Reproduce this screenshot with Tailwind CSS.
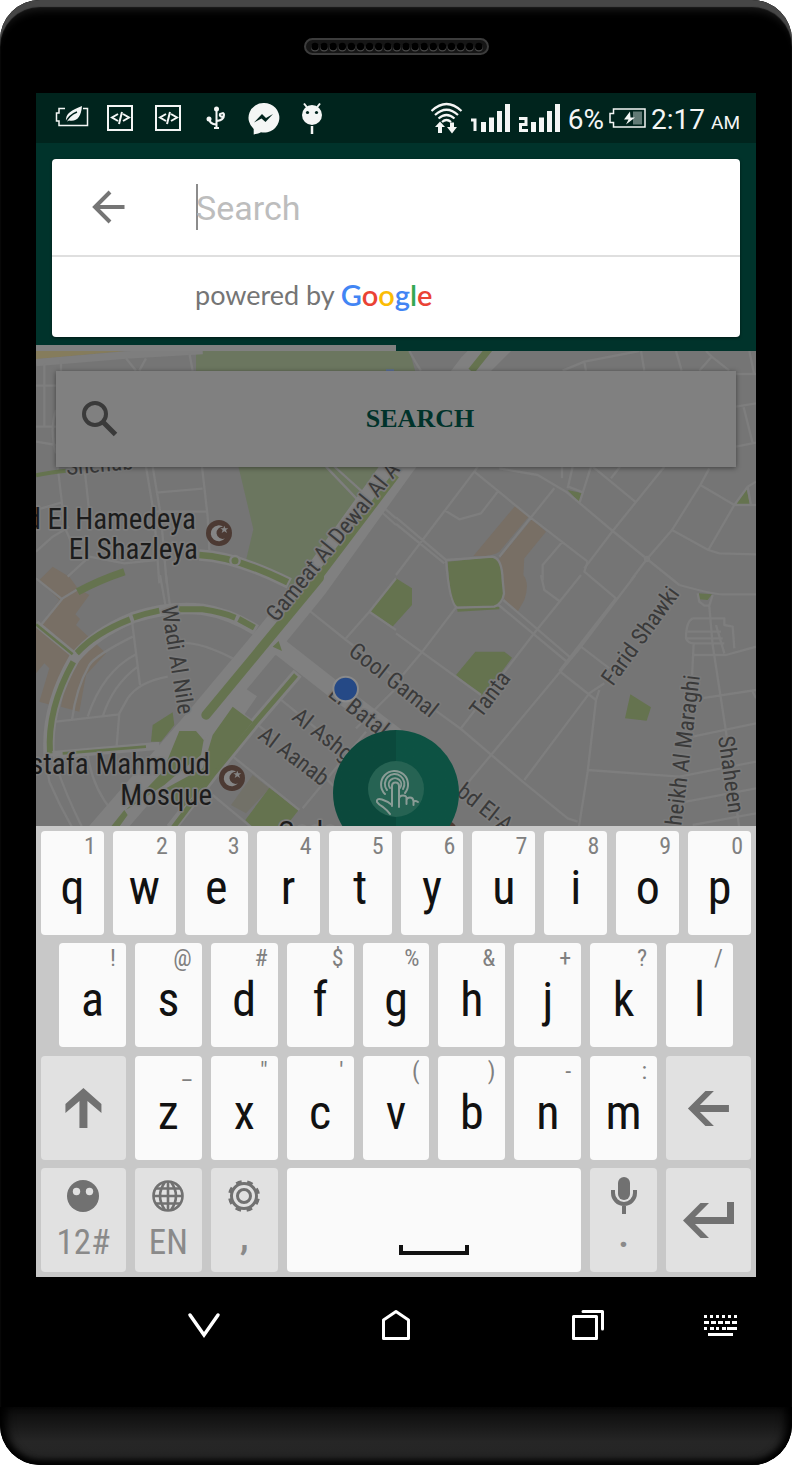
<!DOCTYPE html>
<html lang="en">
<head>
<meta charset="utf-8">
<meta name="viewport" content="width=device-width, initial-scale=1">
<title>Place search</title>
<script src="https://cdn.jsdelivr.net/npm/@tailwindcss/browser@4"></script>
</head>
<body class="bg-white font-['Roboto',sans-serif]">
<div class="flex min-h-screen flex-col overflow-hidden rounded-[40px] bg-black shadow-[inset_0_7px_1px_#464646,inset_0_16px_8px_-6px_#1c1c1c]">

  <!-- Earpiece -->
  <div class="flex h-[93px] justify-center pt-[38px]">
    <div class="h-[17px] w-[185px] rounded-full border-2 border-[#3c3c3c] bg-[#161616]">
      <svg class="block h-full w-full" viewBox="0 0 181 13" aria-hidden="true">
        <path d="M9 7.500H173" stroke="#4a4a4a" stroke-width="8" stroke-linecap="round" stroke-dasharray="0 9.100"/>
        <path d="M9 6.500H173" stroke="#000" stroke-width="7.500" stroke-linecap="round" stroke-dasharray="0 9.100"/>
      </svg>
    </div>
  </div>

  <main class="mx-9">
    <!-- Status bar -->
    <div class="flex h-[50px] items-center justify-between bg-[#00241d] pr-4 pl-3 text-[#f4f6f5]">
      <div class="flex [&>svg]:h-[50px] [&>svg]:w-12" aria-hidden="true">
        <svg viewBox="0 0 48 50" fill="none" stroke="currentColor"><path d="M17 15.500H11V20H8.500V28H11V32.500H39.500V15.500H35" stroke-width="1.500"/><path d="M18 29C17 20 24 17 34 13C33 24 29 29 21 27.500Z" fill="currentColor" stroke="none"/><path d="M17.500 30C20 24 24 21 29 19" stroke="#00241d" stroke-width="1.500"/></svg>
        <svg viewBox="0 0 48 50" fill="none" stroke="currentColor" stroke-width="2"><path d="M12 13H36V37H12Z"/><path d="M22 21L16 24.500L22 28M27 21L33 24.500L27 28M26 19L23 31"/></svg>
        <svg viewBox="0 0 48 50" fill="none" stroke="currentColor" stroke-width="2"><path d="M12 13H36V37H12Z"/><path d="M22 21L16 24.500L22 28M27 21L33 24.500L27 28M26 19L23 31"/></svg>
        <svg viewBox="0 0 48 50" fill="none" stroke="currentColor" stroke-width="2"><path d="M24.500 16V35M22 35H27M17 26Q18 31 24 31.500M25 28Q32 27 32 22M28 21A2 2 0 1 0 31 20Z"/><circle cx="24.500" cy="16" r="2.500" fill="currentColor" stroke="none"/><circle cx="17" cy="26" r="2.500" fill="currentColor" stroke="none"/></svg>
        <svg viewBox="0 0 48 50"><path d="M24 10A15.300 14.800 0 1 1 21 39.300C18 41 15.500 41 13.700 41.500V36A15 14.800 0 0 1 24 10Z" fill="currentColor"/><path d="M14 29.500L22 21L26 25L33 21L25.500 29L21.500 25.500Z" fill="#00241d"/></svg>
        <svg viewBox="0 0 48 50"><circle cx="24" cy="22" r="10" fill="currentColor"/><path d="M19.500 15L16 10.500M28.500 15L32 10.500" stroke="currentColor" stroke-width="2"/><path d="M24 33V41" stroke="currentColor" stroke-width="2.500"/><circle cx="19.500" cy="19.500" r="1.600" fill="#00241d"/><circle cx="28.500" cy="19.500" r="1.600" fill="#00241d"/></svg>
      </div>
      <div class="flex items-center">
        <svg class="h-[50px] w-[132px]" viewBox="430 93 132 50" fill="none" stroke="currentColor" stroke-width="2" aria-hidden="true">
          <path d="M430.500 111Q445.500 97 460.500 111M434 115Q445.500 104.500 457 115M437.500 118.500Q445.500 111.500 453.500 118.500M441 122Q445.500 118 450 122" stroke-width="2.200"/>
          <path d="M434 127L439 121.500L444 127H441V133H437V127ZM446 127H449V122.500H453V127H456L451 133.500Z" fill="currentColor" stroke="none"/>
          <path d="M470 120H474V131" stroke-width="3"/><path d="M482.500 122V132M490.500 117.500V132M498.500 111V132M506.500 104V132M532.500 122V132M540.500 117.500V132M548.500 111V132M556.500 104V132" stroke-width="5"/>
          <path d="M518 118.500H525V124.500H519.500V130.500H527" stroke-width="3"/>
        </svg>
        <span class="ml-[5px] pt-1 text-[28px] leading-8">6%</span>
        <svg class="mx-[5px] h-[50px] w-[37px]" viewBox="0 0 37 50" fill="none" stroke="currentColor" aria-hidden="true"><path d="M4.500 16H36V34H4.500V29.500H1V20.500H4.500Z" stroke-width="1.500"/><path d="M24 18.500H33V31.500H24Z" fill="#617a75" stroke="none"/><path d="M21 18.500L15 26.500H19.500L17 31.500L26 24.500H21.500Z" fill="currentColor" stroke="none"/></svg>
        <span class="flex items-baseline gap-[6px] pt-1 text-[28px] leading-8">2:17<span class="text-[19px] leading-5">AM</span></span>
      </div>
    </div>

    <!-- App header with the autocomplete overlay -->
    <div class="bg-[#00332b]">
      <div class="px-4 pt-4 pb-2">
        <div class="rounded-[4px] bg-white shadow-[0_1px_3px_rgba(0,0,0,0.5)]">
          <div class="flex h-[98px] items-center border-b-2 border-[#dfdfdf] pl-10">
            <button type="button" aria-label="Back" class="w-[104px]">
              <svg class="h-9 w-9" viewBox="0 0 36 36" fill="none" stroke="#757575" stroke-width="4" aria-hidden="true"><path d="M32.500 18H3M18 3L3 18L18 33"/></svg>
            </button>
            <span class="-mr-[2px] h-[46px] w-[2px] bg-[#8c8c8c]"></span>
            <input type="text" aria-label="Search" placeholder="Search" class="h-16 min-w-0 flex-1 bg-transparent pt-[2px] text-[34px] text-[#333] outline-none placeholder:text-[#bdbdbd]">
          </div>
          <div class="flex h-20 items-center gap-[6px] pb-1 pl-[143px] font-['Lato',sans-serif]">
            <span class="text-[27px] text-[#757575]">powered by</span>
            <span class="text-[29px] font-semibold text-[#4285f4]">G<span class="text-[#ea4335]">o</span><span class="text-[#fbbc05]">o</span>g<span class="text-[#34a853]">l</span><span class="text-[#ea4335]">e</span></span>
          </div>
        </div>
      </div>
      <div class="h-[6px] w-1/2 bg-[#808080]"></div>
    </div>

    <!-- Map -->
    <section class="relative h-[475px] overflow-hidden bg-[#757575]" aria-label="Map">
      <svg class="absolute inset-0 h-full w-full" viewBox="0 0 2160 1425" preserveAspectRatio="xMidYMin slice" role="img" aria-label="Street map">
        <!-- parks and built-up areas -->
        <path d="M480 0H1118L1140 80L1090 350L880 640L760 720L624 663L652 545L605 347L480 100Z" transform="translate(0 -10)" fill="#6b765f"/>
        <path d="M0 0H270L0 25Z" fill="#857c5c"/>
        <g transform="translate(0 672)">
          <g fill="#786f65"><path d="M10 15L50 -25L100 5L125 40L160 60L118 118L132 132L120 150L210 235L150 300L130 410L75 395L100 260L15 150L70 75Z"/><path d="M0 150L110 240L60 330L45 390L10 380L40 280L25 265L0 295Z"/></g>
          <path d="M585 690L650 600L700 640L630 715Z" fill="#727168"/>
          <path d="M1000 108L1080 10L1128 40V90L1068 157ZM700 638L788 705L745 760H650L628 735Z" fill="#65734f"/>
        </g>
        <g transform="translate(1080 -63)">
          <g fill="#786f65"><path d="M358 527L398 560L310 665Q290 680 232 678Z"/><path d="M408 567L450 605L385 685L382 735Q402 760 385 810L365 845L325 815L320 720L308 688Z"/></g>
          <g fill="#65734f"><path d="M155 695L285 682Q312 690 318 720L323 800Q315 825 295 827L185 830Q165 820 163 800ZM515 480L560 490L550 518ZM1052 478L1062 525H1018ZM183 836L310 830V838L185 845Z"/><path d="M180 1035L238 965H325L348 983L310 1035L255 1097ZM703 1093L765 1132L752 1172L687 1165ZM905 790L948 793L935 810L908 808Z"/></g>
        </g>
        <!-- minor roads -->
        <g fill="none" stroke="#7e7e7e" stroke-width="7" stroke-linejoin="round">
          <g transform="translate(0 -63)"><path d="M0 98L270 75L500 62" stroke-width="22"/><path d="M25 100V290M75 90V290M0 167H60M0 290H60M0 335L60 345M60 240Q40 300 60 370M65 410L78 520L85 590Q100 620 110 650M145 410L158 530M330 410L355 560L370 760M350 410L375 560L392 760M360 488L500 476M498 410L515 560L520 660M360 545H510M0 540L75 518M0 665L50 620L100 590M95 740L160 680L265 700L360 690M460 70L470 122M270 85L300 122M330 85L310 122M870 410L975 520M890 405L995 500M1040 530L1080 565M1030 540L1080 585"/></g>
          <g transform="translate(0 672)"><path d="M15 150L80 70L130 40M0 10L75 70M287 130L312 330M290 185Q180 240 160 270Q120 340 108 435M300 238Q200 290 155 425M305 275Q230 330 200 425M395 305Q310 320 275 370L250 415L242 512M60 440L250 418M440 205Q490 200 590 250M372 0L390 100M390 0L402 95M60 570Q90 660 140 760M30 560L40 620Q70 690 110 760M155 540Q170 640 230 710M805 95L930 195L1200 400M930 190L1000 110L1080 10M1000 110L1080 165M730 370L1000 590M590 395L720 490M585 540L790 705M800 700L990 470M530 660L650 760M1075 345L960 460M870 610L900 640"/></g>
          <g transform="translate(1080 -63)"><path d="M40 63Q60 100 75 122M500 122L565 95L730 63M565 95L570 122M735 63L745 122M840 63L857 122M910 122L947 80L930 63M947 80L1000 122M1060 63L1075 135M1020 132H1080M1020 230L1080 220M1043 232L1070 340M1020 350L1080 338M235 425L0 735M245 410L235 425L400 560L575 695M305 485L255 550L190 568L148 542M475 475L310 680M310 415L425 435L510 485L650 603L753 687L850 765M515 475L530 410M585 410L550 520M517 470L562 488M590 410L720 517M805 410L650 603L565 715M645 445L672 410M940 415L913 465L828 600L753 687L705 750M913 465L1015 525H1080M1055 470L1015 525L937 660M1055 470L1065 525M1055 470L1080 455M828 600L937 660L970 670L1080 673M498 637L440 705V750M0 562L150 690L290 680Q318 685 320 750L324 790Q320 820 295 830L183 833Q160 820 150 690M0 582L145 700M498 410V445"/><circle cx="753" cy="687" r="6"/></g>
          <g transform="translate(1080 672)"><path d="M180 97L75 235L20 300M0 175L255 360M322 75L520 245M308 90L510 258M555 0L418 170L195 460M718 0L555 215L285 540L210 630M575 -40L565 -10L660 70L490 288M435 0L445 45L490 78M490 288L600 375L610 345M555 215L640 280M110 400L195 462L380 620L515 730L545 740M385 615L580 355L625 325M600 375L575 590L548 760M575 585L850 605L1080 560M850 30Q950 58 980 58H1080M905 55L910 80L925 92H940L950 60M940 95L950 210L990 470L1030 760M890 130H985V150L1010 155L1015 220M890 130Q870 140 870 190Q875 205 895 205H985M875 170H975M870 190H980M960 150L985 235M893 205L885 370M893 240H990L1080 215M915 370L1080 345M890 485L1080 445M870 680L1080 640M890 750L1080 715M1070 350L1080 370"/></g>
        </g>
        <!-- boulevards with planted medians -->
        <g fill="none" stroke-linejoin="round">
          <g transform="translate(0 672)">
            <path d="M40 545Q28 400 115 250Q175 175 290 128Q400 92 500 103Q580 115 660 165" stroke="#808080" stroke-width="34"/>
            <path d="M42 535Q33 400 112 260M122 235Q175 175 282 133M292 128Q330 115 370 107M428 103H500Q560 112 598 128M608 132L655 158" stroke="#65734f" stroke-width="18"/>
            <path d="M125 50Q190 15 265 -10" stroke="#65734f" stroke-width="22"/>
            <path d="M490 -60Q600 -55 760 25" stroke="#808080" stroke-width="34"/><path d="M490 -60Q600 -55 755 22" stroke="#65734f" stroke-width="20"/><circle cx="597" cy="-43" r="14" fill="#65734f" stroke="#808080" stroke-width="7"/>
            <path d="M0 145L115 240" stroke="#808080" stroke-width="20"/><path d="M0 148L110 238" stroke="#65734f" stroke-width="8"/>
            <path d="M50 540L370 512" stroke="#808080" stroke-width="24"/><path d="M80 535L330 515" stroke="#65734f" stroke-width="8"/>
            <path d="M785 295L660 440L530 600L405 760" stroke="#808080" stroke-width="32"/><path d="M780 300L660 440L530 600L410 760" stroke="#65734f" stroke-width="15"/>
            <path d="M690 215H730L890 340L1010 430L1230 600" stroke="#808080" stroke-width="52"/>
          </g>
          <path d="M0 373Q50 362 90 359" stroke="#65734f" stroke-width="12"/>
          <path d="M1400 -40L1310 50L1090 340L830 702L700 862L480 1125L190 1460" stroke="#808080" stroke-width="92"/>
          <path d="M1370 -20L1306 60M1080 372L830 702" stroke="#65734f" stroke-width="22"/>
          <path d="M850 680L700 862L510 1092" stroke="#65734f" stroke-width="28" stroke-linecap="round"/>
          <path d="M640 1020L520 1192L480 1242L330 1322L215 1440" stroke="#808080" stroke-width="56"/>
        </g>
        <g transform="translate(0 672)" fill="#65734f"><path d="M430 468H480L503 495L495 540L420 600L385 630L270 705L380 590Z"/><path d="M590 395L650 440L525 600L440 700L390 640L500 580L530 480Z"/><path d="M410 412L350 450L345 500H375L415 450ZM225 755L265 705L275 720L250 755ZM710 215L728 198L738 228Z"/></g>
        <!-- street names -->
        <g fill="#3a3a3a" stroke="#7a7a7a" stroke-width="10" stroke-linejoin="round" paint-order="stroke" font-family="'Roboto Condensed', Roboto, sans-serif" font-size="69">
          <text transform="translate(92 372) rotate(-5)">Shehab</text>
          <text transform="translate(722 816) rotate(-51)">Gameat Al Dewal Al A</text>
          <text transform="translate(376 768) rotate(81)">Wadi Al Nile</text>
          <text transform="translate(934 908) rotate(38)">Gool Gamal</text>
          <text transform="translate(873 1034) rotate(38)">El Batal</text>
          <text transform="translate(764 1104) rotate(38)">Al Ashg</text>
          <text transform="translate(662 1160) rotate(37)">Al Aanab</text>
          <text transform="translate(1335 1104) rotate(-53)">Tanta</text>
          <text transform="translate(1730 1008) rotate(-54)">Farid Shawki</text>
          <text transform="translate(1936 1426) rotate(-83)">heikh Al Maraghi</text>
          <text transform="translate(2046 1158) rotate(82)">Shaheen</text>
          <text transform="translate(1258 1330) rotate(38)">bd El-A</text>
        </g>
        <g fill="#1c1c1c" stroke="#7d7d7d" stroke-width="10" stroke-linejoin="round" paint-order="stroke" font-family="'Roboto Condensed', Roboto, sans-serif" font-size="87" text-anchor="end">
          <text x="480" y="534">d El Hamedeya</text>
          <text x="486" y="625">El Shazleya</text>
          <text x="522" y="1269">stafa Mahmoud</text>
          <text x="528" y="1361">Mosque</text>
          <text x="965" y="1474">Gada F</text>
        </g>
        <!-- mosque markers -->
        <g transform="translate(549 546)"><circle r="39" fill="#4c3a33"/><path d="M14 -18A24 24 0 1 0 18 16A18 18 0 1 1 14 -18Z" fill="#858585"/><path d="M16 -22L19 -14H28L21 -9L24 0L16 -5L8 0L11 -9L4 -14H13Z" fill="#858585"/></g>
        <g transform="translate(588 1281)"><circle r="39" fill="#4c3a33"/><path d="M14 -18A24 24 0 1 0 18 16A18 18 0 1 1 14 -18Z" fill="#858585"/><path d="M16 -22L19 -14H28L21 -9L24 0L16 -5L8 0L11 -9L4 -14H13Z" fill="#858585"/></g>
        <circle cx="1226" cy="1446" r="39" fill="#4c3a33"/>
        <circle cx="929" cy="1014" r="37" fill="#254986" stroke="#8a8a8a" stroke-width="6"/>
        <path d="M1050 59H1074" stroke="#5a6f9a" stroke-width="8"/>
      </svg>

      <div class="relative px-5 pt-5">
        <button type="button" class="flex h-24 w-full items-center bg-[#808080] pr-[14px] pl-[26px] shadow-[0_1px_5px_rgba(0,0,0,0.45)]">
          <svg class="h-9 w-9" viewBox="0 0 36 36" fill="none" stroke="#3a3a3a" stroke-width="4" aria-hidden="true"><circle cx="13" cy="13" r="11"/><path d="M21 21L33.500 33.500" stroke-width="5"/></svg>
          <span class="flex-1 pb-[2px] text-center font-['Liberation_Serif',serif] text-[26px] font-bold text-[#00332b]">SEARCH</span>
        </button>
      </div>

      <button type="button" aria-label="Pick this location" class="absolute top-[379px] left-1/2 flex h-[126px] w-[126px] -translate-x-1/2 items-center justify-center rounded-full bg-linear-to-r from-[#0b493c] from-50% to-[#0d5243] to-50% pb-[8px]">
        <svg class="h-14 w-14" viewBox="0 0 56 56" fill="none" stroke="#8a9c96" stroke-width="2" stroke-linecap="round" stroke-linejoin="round" aria-hidden="true">
          <circle cx="28" cy="28" r="28" fill="#266353" stroke="none"/>
          <path d="M17 33A13.500 13.500 0 1 1 37 32M19 29A9.800 9.800 0 1 1 35 28M22 27A6.200 6.200 0 1 1 32 27"/>
          <path d="M24 45V25Q24 21.500 27.500 21.500T31 25V46M31 38Q31 34.500 35 34.500T38.500 38V43M38.500 39Q39 36.500 42 36.500T45.500 40V44M45.500 41Q47 39 50 41M24 44Q19 40 14 38.500Q8 37 9 41Q11 44 15 46Q19 49 22 53"/>
        </svg>
      </button>
    </section>

    <!-- Keyboard -->
    <section aria-label="Keyboard" class="flex flex-col gap-2 bg-[#c8c8c8] p-[5px] font-['Roboto_Condensed','Roboto',sans-serif] text-[48px] leading-[58px] text-[#111] [&_button]:h-[104px] [&_button]:min-w-0 [&_button]:overflow-hidden [&_button]:rounded-[4px] [&_span]:h-7 [&_span]:text-right [&_span]:text-[24px] [&_span]:leading-[30px] [&_span]:text-[#808080]">
      <div class="flex gap-[9px] [&_span]:pr-2 [&>button]:flex [&>button]:flex-1 [&>button]:flex-col [&>button]:bg-[#fafafa] [&>button>*]:w-full">
        <button type="button"><span>1</span><b class="font-normal">q</b></button>
        <button type="button"><span>2</span><b class="font-normal">w</b></button>
        <button type="button"><span>3</span><b class="font-normal">e</b></button>
        <button type="button"><span>4</span><b class="font-normal">r</b></button>
        <button type="button"><span>5</span><b class="font-normal">t</b></button>
        <button type="button"><span>6</span><b class="font-normal">y</b></button>
        <button type="button"><span>7</span><b class="font-normal">u</b></button>
        <button type="button"><span>8</span><b class="font-normal">i</b></button>
        <button type="button"><span>9</span><b class="font-normal">o</b></button>
        <button type="button"><span>0</span><b class="font-normal">p</b></button>
      </div>
      <div class="flex gap-[9px] px-[18px] pb-px [&_span]:pr-[10px] [&>button]:flex [&>button]:flex-1 [&>button]:flex-col [&>button]:bg-[#fafafa] [&>button>*]:w-full">
        <button type="button"><span>!</span><b class="font-normal">a</b></button>
        <button type="button"><span>@</span><b class="font-normal">s</b></button>
        <button type="button"><span>#</span><b class="font-normal">d</b></button>
        <button type="button"><span>$</span><b class="font-normal">f</b></button>
        <button type="button"><span>%</span><b class="font-normal">g</b></button>
        <button type="button"><span>&amp;</span><b class="font-normal">h</b></button>
        <button type="button"><span>+</span><b class="font-normal">j</b></button>
        <button type="button"><span>?</span><b class="font-normal">k</b></button>
        <button type="button"><span>/</span><b class="font-normal">l</b></button>
      </div>
      <div class="flex gap-[9px] [&_span]:pr-[10px] [&>button]:flex [&>button]:flex-col [&>button>*]:w-full">
        <button type="button" aria-label="Shift" class="flex-[85] items-center justify-center bg-[#e1e1e1]"><svg class="h-10" viewBox="0 0 36 40" fill="#717171" aria-hidden="true"><path d="M18 0L36 16V25L22 13V40H14V13L0 25V16Z"/></svg></button>
        <button type="button" class="flex-[67] bg-[#fafafa]"><span>_</span><b class="font-normal">z</b></button>
        <button type="button" class="flex-[67] bg-[#fafafa]"><span>"</span><b class="font-normal">x</b></button>
        <button type="button" class="flex-[67] bg-[#fafafa]"><span>'</span><b class="font-normal">c</b></button>
        <button type="button" class="flex-[67] bg-[#fafafa]"><span>(</span><b class="font-normal">v</b></button>
        <button type="button" class="flex-[67] bg-[#fafafa]"><span>)</span><b class="font-normal">b</b></button>
        <button type="button" class="flex-[67] bg-[#fafafa]"><span>-</span><b class="font-normal">n</b></button>
        <button type="button" class="flex-[67] bg-[#fafafa]"><span>:</span><b class="font-normal">m</b></button>
        <button type="button" aria-label="Backspace" class="flex-[85] items-center justify-center bg-[#e1e1e1]"><svg class="h-[35px]" viewBox="0 0 41 35" fill="#717171" aria-hidden="true"><path d="M0 17.500L17.500 0H26L12 14H41V21H12L26 35H17.500Z"/></svg></button>
      </div>
      <div class="flex gap-[9px] text-[35px] leading-[44px] text-[#8a8a8a] [&>button]:flex [&>button]:flex-col [&>button]:items-center">
        <button type="button" class="flex-[85] bg-[#e1e1e1] pt-3"><svg class="mb-[9px] h-8 w-8" viewBox="0 0 32 32" aria-hidden="true"><circle cx="16" cy="16" r="16" fill="#717171"/><circle cx="9.500" cy="11.500" r="3.700" fill="#e1e1e1"/><circle cx="22.500" cy="11.500" r="3.700" fill="#e1e1e1"/></svg>12#</button>
        <button type="button" class="flex-[67] bg-[#e1e1e1] pt-3"><svg class="mb-[9px] h-8 w-8" viewBox="0 0 32 32" fill="none" stroke="#717171" stroke-width="2.600" aria-hidden="true"><circle cx="16" cy="16" r="14.500"/><path d="M16 1V31M1 16H31M4 8.500H28M4 23.500H28M13 2Q3 16 13 30M19 2Q29 16 19 30"/></svg>EN</button>
        <button type="button" class="flex-[67] bg-[#e1e1e1] pt-3 font-bold"><svg class="mb-1 h-8 w-8" viewBox="0 0 32 32" fill="none" stroke="#717171" aria-hidden="true"><circle cx="16" cy="16" r="12.500" stroke-width="3"/><circle cx="16" cy="16" r="6.500" stroke-width="3"/><circle cx="16" cy="16" r="14.500" stroke-width="3" stroke-dasharray="5.694" stroke-dashoffset="-2.850"/></svg>,</button>
        <button type="button" aria-label="Space" class="flex-[295] justify-end bg-[#fafafa] pb-[17px]"><svg class="h-[10px] w-[70px]" viewBox="0 0 70 10" fill="none" stroke="#111" stroke-width="4" aria-hidden="true"><path d="M2 0V8H68V0"/></svg></button>
        <button type="button" class="flex-[67] bg-[#e1e1e1] pt-2 font-bold"><svg class="h-[38px] w-[26px]" viewBox="0 0 26 38" fill="none" stroke="#717171" stroke-width="4" aria-hidden="true"><rect x="7" y="1" width="12" height="23" rx="6" fill="#717171" stroke="none"/><path d="M2 14V17A11 11 0 0 0 24 17V14M13 28V38"/></svg>.</button>
        <button type="button" aria-label="Enter" class="flex-[85] justify-center bg-[#e1e1e1]"><svg class="h-9 w-[51px]" viewBox="0 0 51 36" fill="#717171" aria-hidden="true"><path d="M0 18.500L17.500 1H26L12 15H44V0H51V22H12L26 36H17.500Z"/></svg></button>
      </div>
    </section>

    <!-- Navigation bar -->
    <nav aria-label="System" class="flex h-24 pl-[72px] text-white [&>button]:flex [&>button]:items-center [&>button]:justify-center [&_svg]:h-9 [&_svg]:w-9">
      <button type="button" aria-label="Hide keyboard" class="flex-1"><svg viewBox="0 0 36 36" fill="none" stroke="currentColor" stroke-width="3.500" stroke-linecap="round"><path d="M4 8L18 28L32 8"/></svg></button>
      <button type="button" aria-label="Home" class="flex-1"><svg viewBox="0 0 36 36" fill="none" stroke="currentColor" stroke-width="3" stroke-linejoin="round"><path d="M5.500 31.500V13L18 4.500L30.500 13V31.500Z"/></svg></button>
      <button type="button" aria-label="Recent apps" class="flex-1"><svg viewBox="0 0 36 36" fill="none" stroke="currentColor" stroke-width="3" stroke-linejoin="round" stroke-linecap="round"><path d="M3.500 9.500H26.500V31.500H3.500ZM13 4.500H32.500V22"/></svg></button>
      <button type="button" aria-label="Choose input method" class="w-[72px]"><svg viewBox="0 0 36 36" fill="none" stroke="currentColor" stroke-width="3"><path d="M2 9.500H35" stroke-dasharray="3 3"/><path d="M2 15.500H35" stroke-dasharray="5 2"/><path d="M2 21.500H24" stroke-dasharray="3 3 4 2"/><path d="M25 21.500H35M6 27.500H31"/></svg></button>
    </nav>
  </main>
  <div class="mt-auto h-[58px] rounded-b-[40px] bg-linear-to-b from-[#0b0b0b] via-[#262626] via-60% to-[#242424] shadow-[inset_0_-5px_6px_#000,inset_10px_0_10px_-4px_#000,inset_-10px_0_10px_-4px_#000]"></div>
</div>
</body>
</html>
